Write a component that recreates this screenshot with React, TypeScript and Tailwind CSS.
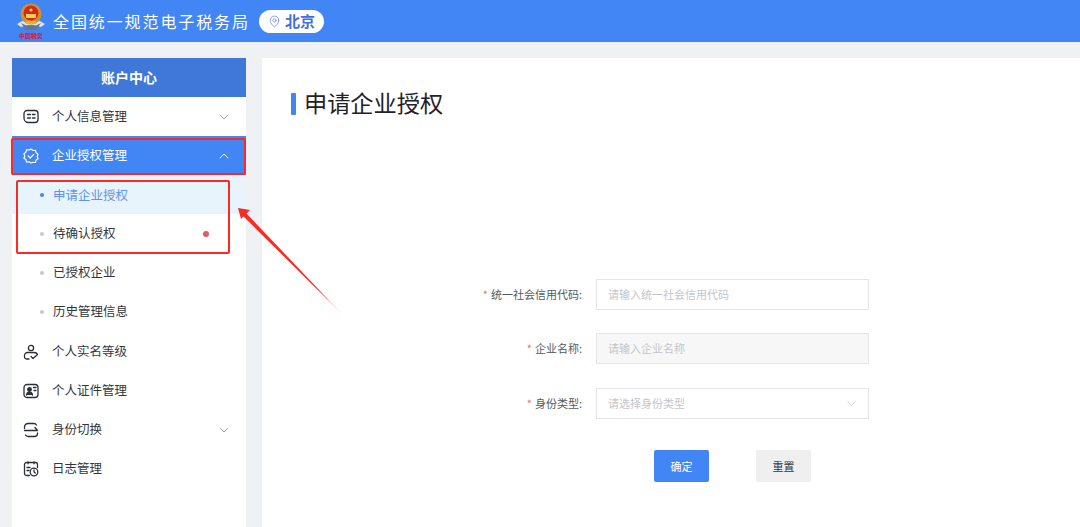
import { ChevronDown, ChevronUp, MapPin } from "lucide-react";
import type { ReactNode } from "react";

function Emblem() {
    return (
        <div className="flex w-[30px] flex-col items-center">
            <svg width="30" height="29" viewBox="0 0 30 29">
                <path d="M1 21 L8 17 L22 17 L29 21 L25 24 L18 22 L12 22 L5 24 Z" fill="#dfe2e7" />
                <path d="M5 20 L11 23 L19 23 L25 20 L20 27 L10 27 Z" fill="#66778c" />
                <circle cx="15" cy="11" r="10.500" fill="#c9962c" />
                <circle cx="15" cy="10" r="7.500" fill="#d7261e" />
                <circle cx="15" cy="7" r="1.600" fill="#f6d04d" />
                <rect x="10" y="11" width="10" height="4" fill="#f6d04d" />
                <rect x="10" y="18" width="10" height="3" fill="#e0b23c" />
            </svg>
            <span className="-mt-[1px] text-[6px] leading-[9px] font-bold whitespace-nowrap text-[#c9262a]">中国税务</span>
        </div>
    );
}

function IconInfo() {
    return (
        <svg width="16" height="16" viewBox="0 0 16 16" fill="none" stroke="#2b2f36" strokeWidth="1.300" strokeLinecap="round" strokeLinejoin="round">
            <path d="M4 1.500h8a3 3 0 0 1 3 3v6a3 3 0 0 1-3 3H5.500a4.500 4.500 0 0 1-4.500-4.500v-4.500a3 3 0 0 1 3-3z" />
            <path d="M4.500 5.500h3M9.500 5.500h2.500M4.500 9h3M9.500 9h2.500" />
        </svg>
    );
}

function IconBadge() {
    return (
        <svg width="16" height="16" viewBox="0 0 16 16" fill="none" stroke="#ffffff" strokeWidth="1.200" strokeLinejoin="round" strokeLinecap="round">
            <path d="M8 1l2 1.500 2.500-.2.600 2.400 2 1.500-.9 2.300.9 2.300-2 1.300-.6 2.400-2.500-.2L8 15l-2-1.200-2.500.2-.6-2.400-2-1.300.9-2.300-.9-2.300 2-1.500.6-2.400 2.500.2z" />
            <path d="M5.300 8l2 2 3.400-3.600" />
        </svg>
    );
}

function IconPerson() {
    return (
        <svg width="16" height="16" viewBox="0 0 16 16" fill="none" stroke="#2b2f36" strokeWidth="1.300" strokeLinecap="round" strokeLinejoin="round">
            <circle cx="8" cy="4" r="2.600" />
            <path d="M6 15H3.500a2 2 0 0 1-2-2v-1.500a3 3 0 0 1 3-3h6.500c1.500 0 3 .6 3.500 2" />
            <path d="M8 12.500l2 2 4-3.500" />
        </svg>
    );
}

function IconCard() {
    return (
        <svg width="16" height="16" viewBox="0 0 16 16" fill="none" stroke="#2b2f36" strokeWidth="1.300" strokeLinecap="round">
            <path d="M12 14.500H4a3 3 0 0 1-3-3v-7a3 3 0 0 1 3-3h8a3 3 0 0 1 3 3v7a3 3 0 0 1-3 3z" />
            <circle cx="6.500" cy="6.500" r="1.800" fill="#2b2f36" />
            <path d="M3.500 12c.4-2 1.500-2.800 3-2.800s2.600.8 3 2.800" fill="#2b2f36" />
            <path d="M10.500 4.500h2.500M11 7.500h2" />
        </svg>
    );
}

function IconSwitch() {
    return (
        <svg width="16" height="16" viewBox="0 0 16 16" fill="none" stroke="#2b2f36" strokeWidth="1.300" strokeLinecap="round" strokeLinejoin="round">
            <path d="M1.500 6.500V5a3.500 3.500 0 0 1 3.500-3.500h6a3 3 0 0 1 2.500 1.500" />
            <path d="M1.500 8.500h13L12 5.500" />
            <path d="M14.500 11v.500a3 3 0 0 1-3 3H5a3 3 0 0 1-2.500-1.500" />
        </svg>
    );
}

function IconLog() {
    return (
        <svg width="16" height="16" viewBox="0 0 16 16" fill="none" stroke="#2b2f36" strokeWidth="1.300" strokeLinecap="round">
            <path d="M6.500 14.500H3.500a2 2 0 0 1-2-2v-9a2 2 0 0 1 2-2h9a2 2 0 0 1 2 2v3" />
            <path d="M5 .8v2M11 .8v2M4 6.500h3M4 9.500h2" />
            <circle cx="11" cy="11" r="3.800" />
            <path d="M11 9v2l1.300 1" />
        </svg>
    );
}

function MenuItem({ icon, label, chevron, active }: { icon: ReactNode; label: string; chevron?: "up" | "down"; active?: boolean }) {
    return (
        <div className={`flex h-[39px] items-center pr-[14px] pl-[11px] text-[12.5px] ${active ? "bg-[#4285f4] text-white" : "text-[#33373d]"}`}>
            <span className="flex w-[16px] justify-center">{icon}</span>
            <span className="ml-[13px] flex-1">{label}</span>
            {chevron === "down" && <ChevronDown size={16} strokeWidth={1.100} className="text-[#7f848c]" />}
            {chevron === "up" && <ChevronUp size={16} strokeWidth={1.400} className="text-white" />}
        </div>
    );
}

function SubItem({ label, active, badge }: { label: string; active?: boolean; badge?: boolean }) {
    return (
        <div className={`flex h-[39px] items-center pl-[28px] text-[12.5px] ${active ? "bg-[#e8f4fc] pt-px text-[#5f93f5]" : "text-[#33373d]"}`}>
            <span className={`size-[4px] rounded-full ${active ? "bg-[#4285f4]" : "bg-[#c8c8c8]"}`} />
            <span className="ml-[9px] w-[150px]">{label}</span>
            {badge && <span className="size-[6px] rounded-full bg-[#e85a5f]" />}
        </div>
    );
}

function Sidebar() {
    return (
        <aside className="w-[234px] shrink-0 bg-white">
            <div className="flex h-[39px] items-center justify-center bg-[#3f78d8] text-[14px] font-bold text-white">账户中心</div>
            <MenuItem icon={<IconInfo />} label="个人信息管理" chevron="down" />
            <MenuItem icon={<IconBadge />} label="企业授权管理" chevron="up" active />
            <SubItem label="申请企业授权" active />
            <SubItem label="待确认授权" badge />
            <SubItem label="已授权企业" />
            <SubItem label="历史管理信息" />
            <div className="pt-px">
                <MenuItem icon={<IconPerson />} label="个人实名等级" />
                <MenuItem icon={<IconCard />} label="个人证件管理" />
                <MenuItem icon={<IconSwitch />} label="身份切换" chevron="down" />
                <MenuItem icon={<IconLog />} label="日志管理" />
            </div>
        </aside>
    );
}

function FormRow({ label, className, children }: { label: string; className?: string; children: ReactNode }) {
    return (
        <div className={`flex items-center ${className ?? ""}`}>
            <label className="w-[334px] pr-[14px] text-right text-[11px] text-[#555a60]">
                <span className="mr-[3px] text-[#f56c6c]">*</span>
                {label}:
            </label>
            {children}
        </div>
    );
}

const inputClass = "flex h-[31px] w-[273px] items-center justify-between border border-[#e4e6ea] pr-[9px] pl-[11px] text-[11px] text-[#c4c6ca]";

function ApplyForm() {
    return (
        <div className="mt-[164px] ml-[-29px]">
            <FormRow label="统一社会信用代码">
                <div className={inputClass}>请输入统一社会信用代码</div>
            </FormRow>
            <FormRow label="企业名称" className="mt-[23px]">
                <div className={`${inputClass} bg-[#f7f7f8]`}>请输入企业名称</div>
            </FormRow>
            <FormRow label="身份类型" className="mt-[24px]">
                <div className={inputClass}>
                    请选择身份类型
                    <ChevronDown size={15} strokeWidth={1} className="text-[#b0b5be]" />
                </div>
            </FormRow>
            <div className="mt-[31px] ml-[392px] flex gap-[47px] text-[11px]">
                <button className="h-[32px] w-[55px] rounded-[2px] bg-[#4285f4] text-white">确定</button>
                <button className="h-[32px] w-[55px] rounded-[2px] bg-[#efefef] text-[#33373d]">重置</button>
            </div>
        </div>
    );
}

function Annotations() {
    return (
        <>
            <div className="absolute top-[138px] left-[11px] h-[37px] w-[235px] rounded-[2px] border-2 border-[#fb2b24]" />
            <div className="absolute top-[180px] left-[16px] h-[74px] w-[214px] rounded-[2px] border-2 border-[#fb2b24]" />
            <svg className="absolute top-0 left-0" width="1080" height="527" viewBox="0 0 1080 527">
                <defs>
                    <linearGradient id="arrowFade" x1="238" y1="208" x2="342" y2="314" gradientUnits="userSpaceOnUse">
                        <stop offset="0" stopColor="#fb2b24" />
                        <stop offset="0.75" stopColor="#fb2b24" />
                        <stop offset="1" stopColor="#fb2b24" stopOpacity="0.15" />
                    </linearGradient>
                </defs>
                <polygon points="238,208 250,210 246.500,213.500 342,314 243.500,216.500 241,219" fill="url(#arrowFade)" />
            </svg>
        </>
    );
}

export default function App() {
    return (
        <div className="relative flex h-[527px] w-[1080px] flex-col overflow-hidden bg-[#f0f1f4] font-['Noto_Sans_CJK_SC','Liberation_Sans',sans-serif]">
            <header className="flex h-[42px] shrink-0 items-center bg-[#4285f4] pl-[16px]">
                <Emblem />
                <span className="ml-[7px] text-[16px] tracking-[1.900px] text-white">全国统一规范电子税务局</span>
                <div className="ml-[9px] flex h-[23px] w-[65px] items-center rounded-full bg-white pl-[9px] text-[#3f6fd8]">
                    <MapPin size={13} strokeWidth={1.500} className="text-[#6b93e8]" />
                    <span className="ml-[4px] text-[15px] font-bold">北京</span>
                </div>
            </header>
            <div className="flex min-h-0 flex-1 pt-[16px] pl-[12px]">
                <Sidebar />
                <main className="ml-[16px] flex-1 bg-white pt-[35px] pl-[29px]">
                    <div className="flex h-[22px] items-center">
                        <span className="h-[22px] w-[5px] rounded-[1px] bg-[#4285f4]" />
                        <h1 className="-mt-[3px] ml-[8px] text-[23.200px] text-[#1f2329]">申请企业授权</h1>
                    </div>
                    <ApplyForm />
                </main>
            </div>
            <Annotations />
        </div>
    );
}
